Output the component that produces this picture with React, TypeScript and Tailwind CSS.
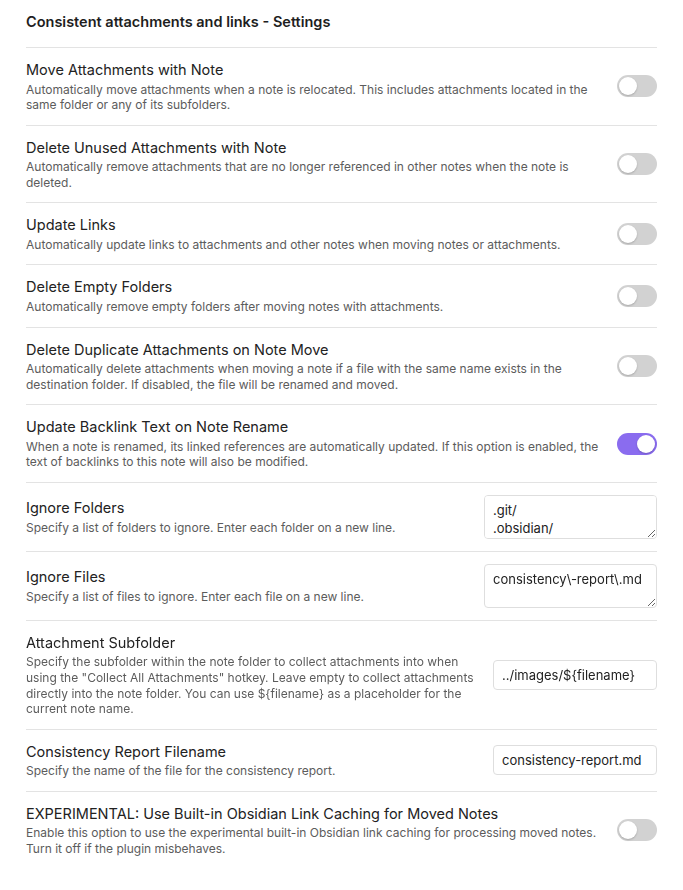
import React, { useState } from "react";

type Control =
  | { kind: "toggle"; on: boolean }
  | { kind: "textarea"; value: string }
  | { kind: "input"; value: string };

type Setting = {
  name: string;
  desc: string;
  control: Control;
};

const settings: Setting[] = [
  {
    name: "Move Attachments with Note",
    desc: "Automatically move attachments when a note is relocated. This includes attachments located in the same folder or any of its subfolders.",
    control: { kind: "toggle", on: false },
  },
  {
    name: "Delete Unused Attachments with Note",
    desc: "Automatically remove attachments that are no longer referenced in other notes when the note is deleted.",
    control: { kind: "toggle", on: false },
  },
  {
    name: "Update Links",
    desc: "Automatically update links to attachments and other notes when moving notes or attachments.",
    control: { kind: "toggle", on: false },
  },
  {
    name: "Delete Empty Folders",
    desc: "Automatically remove empty folders after moving notes with attachments.",
    control: { kind: "toggle", on: false },
  },
  {
    name: "Delete Duplicate Attachments on Note Move",
    desc: "Automatically delete attachments when moving a note if a file with the same name exists in the destination folder. If disabled, the file will be renamed and moved.",
    control: { kind: "toggle", on: false },
  },
  {
    name: "Update Backlink Text on Note Rename",
    desc: "When a note is renamed, its linked references are automatically updated. If this option is enabled, the text of backlinks to this note will also be modified.",
    control: { kind: "toggle", on: true },
  },
  {
    name: "Ignore Folders",
    desc: "Specify a list of folders to ignore. Enter each folder on a new line.",
    control: { kind: "textarea", value: ".git/\n.obsidian/" },
  },
  {
    name: "Ignore Files",
    desc: "Specify a list of files to ignore. Enter each file on a new line.",
    control: { kind: "textarea", value: "consistency\\-report\\.md" },
  },
  {
    name: "Attachment Subfolder",
    desc: 'Specify the subfolder within the note folder to collect attachments into when using the "Collect All Attachments" hotkey. Leave empty to collect attachments directly into the note folder. You can use ${filename} as a placeholder for the current note name.',
    control: { kind: "input", value: "../images/${filename}" },
  },
  {
    name: "Consistency Report Filename",
    desc: "Specify the name of the file for the consistency report.",
    control: { kind: "input", value: "consistency-report.md" },
  },
  {
    name: "EXPERIMENTAL: Use Built-in Obsidian Link Caching for Moved Notes",
    desc: "Enable this option to use the experimental built-in Obsidian link caching for processing moved notes. Turn it off if the plugin misbehaves.",
    control: { kind: "toggle", on: false },
  },
];

const Toggle: React.FC<{ initial: boolean }> = ({ initial }) => {
  const [on, setOn] = useState(initial);
  return (
    <button
      type="button"
      onClick={() => setOn(!on)}
      className={`relative w-[40px] h-[22px] rounded-full shrink-0 transition-colors ${
        on ? "bg-[#8a6cef]" : "bg-[#d2d2d2]"
      }`}
    >
      <span
        className={`absolute top-[2px] left-[2px] w-[18px] h-[18px] rounded-full bg-white shadow-[0_1px_2px_rgba(0,0,0,0.2)] transition-transform ${
          on ? "translate-x-[18px]" : "translate-x-0"
        }`}
      />
    </button>
  );
};

const SettingControl: React.FC<{ control: Control }> = ({ control }) => {
  if (control.kind === "toggle") return <Toggle initial={control.on} />;
  if (control.kind === "textarea")
    return (
      <textarea
        defaultValue={control.value}
        rows={2}
        className="w-[173px] h-[44px] shrink-0 rounded-[4px] border border-[#dedede] bg-white px-[8px] pt-[5px] pb-[2px] text-[13px] leading-[18px] text-[#222] outline-none"
      />
    );
  return (
    <input
      type="text"
      defaultValue={control.value}
      className="w-[164px] h-[30px] shrink-0 rounded-[4px] border border-[#dedede] bg-white px-[8px] text-[13px] text-[#222] outline-none"
    />
  );
};

export default function App() {
  return (
    <div
      className="min-h-screen bg-white px-[26px] text-[#222]"
      style={{ fontFamily: 'Inter, "Noto Sans", sans-serif' }}
    >
      <div className="pt-[12px] pb-[15px] text-[14.5px] leading-[20px] font-semibold text-[#1e1e1e]">
        Consistent attachments and links - Settings
      </div>

      {settings.map((s) => (
        <div
          key={s.name}
          className="flex items-center border-t border-[#e3e3e3] py-[12px]"
        >
          <div className="flex-1 mr-[16px]">
            <div className="text-[14.5px] leading-[19.5px] text-[#222]">
              {s.name}
            </div>
            <div className="pt-[2px] text-[12px] leading-[15.6px] text-[#5c5c5c]">
              {s.desc}
            </div>
          </div>
          <SettingControl control={s.control} />
        </div>
      ))}
    </div>
  );
}
